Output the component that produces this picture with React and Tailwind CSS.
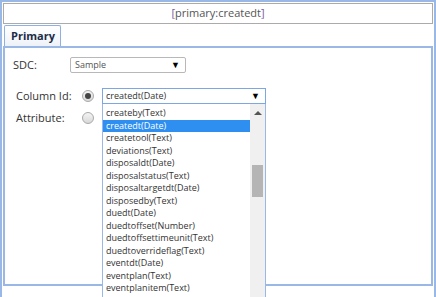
import React from "react";

const items = [
  "createby(Text)",
  "createdt(Date)",
  "createtool(Text)",
  "deviations(Text)",
  "disposaldt(Date)",
  "disposalstatus(Text)",
  "disposaltargetdt(Date)",
  "disposedby(Text)",
  "duedt(Date)",
  "duedtoffset(Number)",
  "duedtoffsettimeunit(Text)",
  "duedtoverrideflag(Text)",
  "eventdt(Date)",
  "eventplan(Text)",
  "eventplanitem(Text)",
];

function Radio({ checked }) {
  return (
    <div className="w-[12px] h-[12px] rounded-full border border-[#a9a9a9] bg-gradient-to-b from-[#f4f4f4] to-[#d8d8d8] flex items-center justify-center">
      {checked && <div className="w-[6px] h-[6px] rounded-full bg-[#444]" />}
    </div>
  );
}

export default function App() {
  return (
    <div
      className="relative w-[436px] h-[297px] overflow-hidden bg-white"
      style={{ fontFamily: '"Open Sans", "Noto Sans", sans-serif' }}
    >
      <div className="h-full border-x-2 border-t-2 border-[#9ab8e6] px-[1px] pt-[1px]">
        <div className="h-[21px] border border-[#ababab] flex items-center justify-center text-[11px] text-[#555]">
          <span className="text-[#7a5a9a]">[</span>
          <span>primary:createdt</span>
          <span className="text-[#7a5a9a]">]</span>
        </div>
        <div className="flex h-[21px] mt-[1px]">
          <div className="ml-[1px] w-[57px] border border-b-0 border-[#8fb0e0] rounded-t-[2px] bg-gradient-to-b from-[#ffffff] to-[#eef2f8] flex items-center pl-[6px] text-[11px] font-bold text-[#1b2b48]">
            Primary
          </div>
        </div>
        <div className="h-[240px] border-2 border-[#9ab8e6]">
          <div className="flex items-center h-[16px] mt-[9px]">
            <div className="ml-[8px] w-[57px] text-[11px] text-[#333]">SDC:</div>
            <div className="w-[116px] h-[16px] border border-[#b8b8b8] rounded-[2px] flex items-center justify-between pl-[4px] pr-[5px] text-[9px] text-[#555]">
              <span>Sample</span>
              <span className="text-[9px] text-black">▼</span>
            </div>
          </div>
          <div className="flex items-center h-[16px] mt-[15px]">
            <div className="ml-[11px] w-[66px] text-[11px] text-[#333]">Column Id:</div>
            <Radio checked />
            <div className="ml-[8px] w-[164px] h-[16px] border border-[#7ea6e0] flex items-center justify-between pl-[3px] pr-[5px] text-[9px] text-[#333]">
              <span>createdt(Date)</span>
              <span className="text-[9px] text-black">▼</span>
            </div>
          </div>
          <div className="flex items-center h-[16px] mt-[6px]">
            <div className="ml-[11px] w-[66px] text-[11px] text-[#333]">Attribute:</div>
            <Radio />
          </div>
        </div>
      </div>

      <div className="absolute left-[102px] top-[104px] w-[164px] h-[200px] bg-white border-x border-[#9ab8e6] flex">
        <div className="flex-1 pt-[3px]">
          {items.map((it, i) => (
            <div
              key={it}
              className={
                "h-[12.5px] leading-[12.5px] pl-[3px] text-[9px] whitespace-nowrap " +
                (i === 1 ? "bg-[#2e8ff0] text-white" : "text-[#333]")
              }
            >
              {it}
            </div>
          ))}
        </div>
        <div className="w-[15px] bg-[#f0f0f0] relative">
          <div className="absolute left-[4px] top-[7px] w-0 h-0 border-x-[4px] border-x-transparent border-b-[4px] border-b-[#555]" />
          <div className="absolute left-[2px] top-[61px] w-[11px] h-[32px] bg-[#b5b5b5]" />
        </div>
      </div>
    </div>
  );
}
